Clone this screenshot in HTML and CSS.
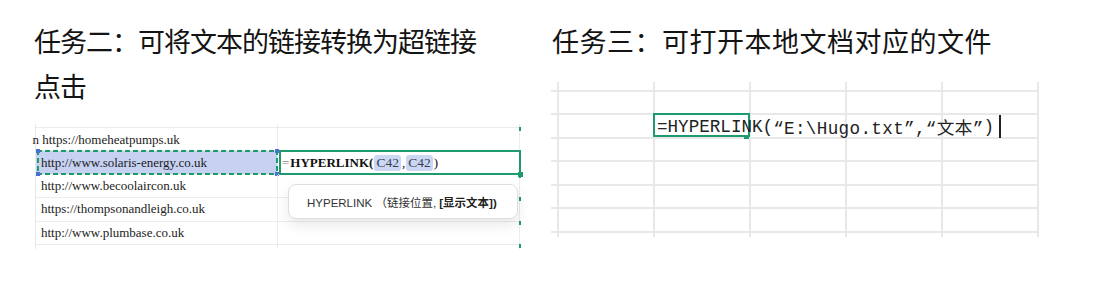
FILE: index.html
```html
<!DOCTYPE html>
<html lang="zh-CN">
<head>
<meta charset="utf-8">
<title>HYPERLINK</title>
<link rel="stylesheet" href="styles.css">
</head>
<body>
<main class="page">
  <section class="task task-left">
    <h2 class="title title-left">任务二：可将文本的链接转换为超链接点击</h2>
    <div class="sheet-l">
      <div class="c"></div><div class="c"></div>
      <div class="c"><span class="spill">n https://homeheatpumps.uk</span></div><div class="c tick"></div>
      <div class="c sel">http://www.solaris-energy.co.uk<span class="h h-tl"></span><span class="h h-bl"></span><span class="h h-tr"></span><span class="h h-br"></span></div>
      <div class="c edit"><span class="eq">=</span><b>HYPERLINK(</b><span class="ref">C42</span>,<span class="ref">C42</span>)</div>
      <div class="c">http://www.becoolaircon.uk</div><div class="c tick"></div>
      <div class="c">https://thompsonandleigh.co.uk</div><div class="c tick"></div>
      <div class="c">http://www.plumbase.co.uk</div><div class="c tick"></div>
      <div class="c last"></div><div class="c last tick"></div>
      <div class="tip">HYPERLINK （链接位置, <b>[显示文本])</b></div>
    </div>
  </section>
  <section class="task task-right">
    <h2 class="title title-right">任务三：可打开本地文档对应的文件</h2>
    <div class="sheet-r">
      <div class="g"></div><div class="g"></div><div class="g"></div><div class="g"></div><div class="g"></div><div class="g"></div>
      <div class="g"></div><div class="g"></div><div class="g"></div><div class="g"></div><div class="g"></div><div class="g"></div>
      <div class="g"></div><div class="g"></div><div class="g active"><span class="formula">=HYPERLINK(<span class="q">“E:\Hugo.txt”,“文本”</span>)<span class="caret"></span></span></div><div class="g"></div><div class="g"></div><div class="g"></div>
      <div class="g"></div><div class="g"></div><div class="g"></div><div class="g"></div><div class="g"></div><div class="g"></div>
      <div class="g"></div><div class="g"></div><div class="g"></div><div class="g"></div><div class="g"></div><div class="g"></div>
      <div class="g"></div><div class="g"></div><div class="g"></div><div class="g"></div><div class="g"></div><div class="g"></div>
      <div class="g"></div><div class="g"></div><div class="g"></div><div class="g"></div><div class="g"></div><div class="g"></div>
      <div class="g end"></div><div class="g end"></div><div class="g end"></div><div class="g end"></div><div class="g end"></div><div class="g end"></div>
    </div>
  </section>
</main>
</body>
</html>
```

FILE: styles.css
```css
html, body {
  margin: 0;
  padding: 0;
  background: #ffffff;
}

.page {
  display: flex;
  align-items: flex-start;
  padding: 18px 0 0 35px;
  gap: 31px;
}

.task {
  display: flex;
  flex-direction: column;
}

.title {
  margin: 0;
  font-family: "Noto Sans CJK SC", "Noto Sans", sans-serif;
  font-weight: 400;
  font-size: 27px;
  line-height: 45px;
  color: #141414;
}

.title-left {
  width: 455px;
  margin-left: -1px;
  letter-spacing: -1px;
}

.title-right {
  letter-spacing: 0.5px;
  padding-left: 1px;
}

/* ---------- left sheet ---------- */
.sheet-l {
  position: relative;
  margin-top: 16px;
  display: grid;
  grid-template-columns: 242px 242px;
  grid-template-rows: 4px repeat(5, 23.4px) 4px;
  border-left: 1px solid #e8e8e8;
  width: 484px;
}

.sheet-l .c {
  position: relative;
  box-sizing: border-box;
  display: flex;
  align-items: center;
  padding-left: 5px;
  border-right: 1px solid #ececec;
  border-bottom: 1px solid #ececec;
  font-family: "Liberation Serif", "Noto Sans CJK SC", serif;
  font-size: 13px;
  color: #1c1c1c;
  white-space: nowrap;
}

.sheet-l .c.last {
  border-bottom: none;
}

.spill {
  margin-left: -8.5px;
  position: relative;
  top: 1px;
}

.sheet-l .tick::after {
  content: "";
  position: absolute;
  right: -2px;
  top: -1px;
  width: 2px;
  height: 4px;
  background: #1f9a6c;
}

.sheet-l .c.sel {
  background: #c7d1f1;
}

.sheet-l .c.sel::before {
  content: "";
  position: absolute;
  top: -1px;
  left: 1px;
  right: -1px;
  bottom: -1px;
  background:
    repeating-linear-gradient(90deg, #1f9a6c 0 5px, transparent 5px 8px) top left / 100% 2px no-repeat,
    repeating-linear-gradient(90deg, #1f9a6c 0 5px, transparent 5px 8px) bottom left / 100% 2px no-repeat,
    repeating-linear-gradient(180deg, #1f9a6c 0 5px, transparent 5px 8px) top left / 2px 100% no-repeat,
    repeating-linear-gradient(180deg, #1f9a6c 0 5px, transparent 5px 8px) top right / 2px 100% no-repeat;
}

.h {
  position: absolute;
  width: 4px;
  height: 4px;
  background: #4b6fd4;
}
.h-tl { left: 0; top: -2px; }
.h-bl { left: 0; bottom: -2px; }
.h-tr { right: -2px; top: -2px; }
.h-br { right: -2px; bottom: -2px; }

.sheet-l .c.edit {
  padding-left: 4px;
  color: #111;
}

.sheet-l .c.edit::before {
  content: "";
  position: absolute;
  top: -1px;
  left: 1px;
  right: -2px;
  bottom: -1px;
  border: 2px solid #1f9a6c;
}

.sheet-l .c.edit::after {
  content: "";
  position: absolute;
  right: -4px;
  bottom: -3px;
  width: 5px;
  height: 5px;
  background: #1f9a6c;
}

.eq {
  color: #8a8a8a;
  margin-right: 1px;
}

.ref {
  background: #ccd7f3;
  color: #3a3f55;
  border-radius: 3px;
  padding: 0 2px;
  margin: 0 1px;
  font-size: 13.5px;
}

.tip {
  position: absolute;
  left: 252px;
  top: 60px;
  width: 230px;
  height: 35px;
  box-sizing: border-box;
  display: flex;
  align-items: center;
  padding-left: 18px;
  background: #ffffff;
  border: 1px solid #dedede;
  border-radius: 8px;
  box-shadow: 0 6px 14px rgba(0, 0, 0, 0.09);
  font-family: "Liberation Sans", "Noto Sans CJK SC", sans-serif;
  font-size: 11.5px;
  color: #333333;
  white-space: pre;
}

.tip b {
  color: #222;
  font-weight: 700;
}

/* ---------- right sheet ---------- */
.sheet-r {
  margin-top: 18.5px;
  display: grid;
  grid-template-columns: 8px repeat(5, 96px);
  grid-template-rows: 10px repeat(6, 23.6px) 4px;
  width: 488px;
}

.sheet-r .g {
  position: relative;
  box-sizing: border-box;
  border-right: 2px solid #e8e8e8;
  border-bottom: 2px solid #e8e8e8;
}

.sheet-r .g.end {
  border-bottom: none;
}

.sheet-r .g.active {
  display: flex;
  align-items: center;
  z-index: 2;
}

.sheet-r .g.active::before {
  content: "";
  position: absolute;
  top: -2px;
  left: -2px;
  right: -1px;
  bottom: 0;
  border: 2.5px solid #1f9a6c;
  pointer-events: none;
}

.sheet-r .g.active::after {
  content: "";
  position: absolute;
  right: 0;
  bottom: -2px;
  width: 5px;
  height: 4px;
  background: #1f9a6c;
}

.formula {
  display: flex;
  align-items: center;
  padding-left: 2px;
  white-space: nowrap;
  font-family: "Liberation Mono", "Noto Sans CJK SC", monospace;
  font-size: 17.6px;
  color: #222222;
  position: relative;
  top: 1px;
}

.q {
  letter-spacing: 0.35px;
}

.caret {
  display: inline-block;
  width: 2px;
  height: 23px;
  margin-left: 5px;
  background: #222222;
}
```
